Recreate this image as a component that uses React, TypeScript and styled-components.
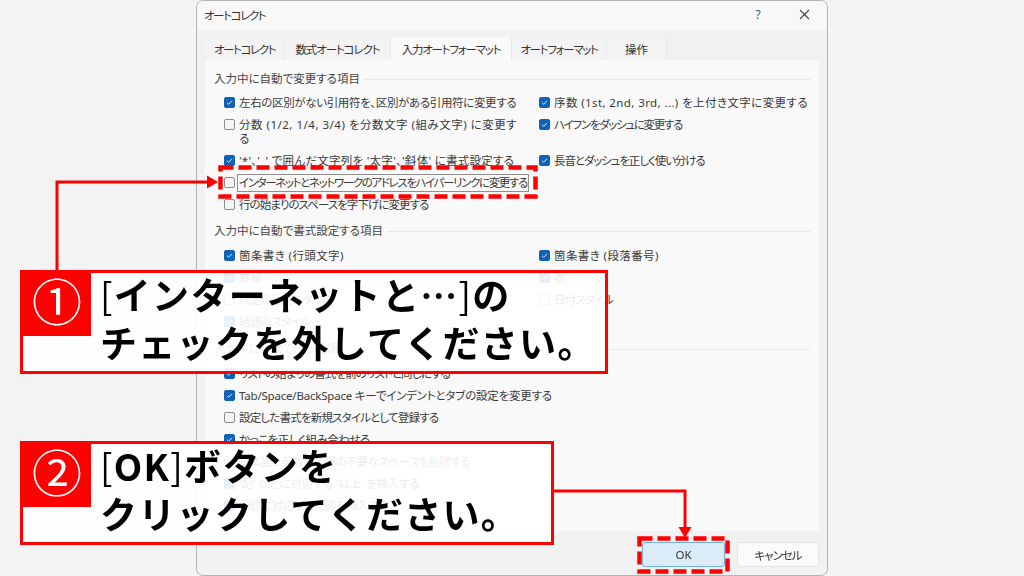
import styled, { createGlobalStyle } from "styled-components";

const GlobalStyle = createGlobalStyle`
  html, body {
    margin: 0;
    padding: 0;
    background: #f3f3f3;
  }
  body {
    font-family: "Noto Sans", "Noto Sans CJK JP", sans-serif;
  }
`;

type RowData = { label: React.ReactNode; checked?: boolean; track?: number };

const section1: RowData[] = [
  { label: "左右の区別がない引用符を、区別がある引用符に変更する", checked: true, track: -0.35 },
  { label: "序数 (1st, 2nd, 3rd, ...) を上付き文字に変更する", checked: true, track: 0.4 },
  { label: <>分数 (1/2, 1/4, 3/4) を分数文字 (組み文字) に変更す<br />る</>, track: 0.5 },
  { label: "ハイフンをダッシュに変更する", checked: true, track: -1.3 },
  { label: "'*'、'_' で囲んだ文字列を '太字'、'斜体' に書式設定する", checked: true, track: 0.27 },
  { label: "長音とダッシュを正しく使い分ける", checked: true, track: -1.1 },
];

const section2: RowData[] = [
  { label: "箇条書き (行頭文字)", checked: true, track: 0.4 },
  { label: "箇条書き (段落番号)", checked: true, track: 0.4 },
  { label: "罫線", checked: true },
  { label: "表", checked: true },
  { label: "既定の段落スタイル", track: -0.6 },
  { label: "日付スタイル", track: -0.9 },
  { label: "結語のスタイル", checked: true, track: -0.6 },
];

const section3: RowData[] = [
  { label: "リストの始まりの書式を前のリストと同じにする", checked: true, track: -0.9 },
  { label: "Tab/Space/BackSpace キーでインデントとタブの設定を変更する", checked: true, track: -0.2 },
  { label: "設定した書式を新規スタイルとして登録する", track: -0.8 },
  { label: "かっこを正しく組み合わせる", checked: true, track: -0.5 },
  { label: "日本語と英数字の間の不要なスペースを削除する", track: -0.6 },
  { label: "'記' などに対応する '以上' を挿入する", checked: true, track: -0.2 },
  { label: "頭語に対応する結語を挿入する", checked: true, track: -0.4 },
];

const tabs = [
  { label: "オートコレクト", width: 80, track: -1.4 },
  { label: "数式オートコレクト", width: 106, track: -1.1 },
  { label: "入力オートフォーマット", width: 121, track: -1.2, active: true },
  { label: "オートフォーマット", width: 95, track: -1.3 },
  { label: "操作", width: 60, track: 0 },
];

const Option = ({ label, checked, track, focused }: RowData & { focused?: boolean }) => (
  <Row>
    <Check $checked={checked}>
      {checked && (
        <svg width="9" height="9" viewBox="0 0 9 9" fill="none">
          <path d="M2 4.7 3.7 6.3 7 2.8" stroke="#dfeaf6" strokeWidth="1" />
        </svg>
      )}
    </Check>
    <Label $focused={focused} $track={track ?? 0}>{label}</Label>
  </Row>
);

const App = () => (
  <>
    <GlobalStyle />
    <Page>
      <Dialog>
        <TitleBar>
          <Title>オートコレクト</Title>
          <Help>?</Help>
          <CloseBtn>
            <svg width="11" height="11" viewBox="0 0 11 11" fill="none">
              <path d="M1 1 10 10M10 1 1 10" stroke="#444" strokeWidth="1.1" />
            </svg>
          </CloseBtn>
        </TitleBar>

        <Tabs>
          {tabs.map((t) => (
            <Tab key={t.label} $width={t.width} $active={t.active} $track={t.track}>
              {t.label}
            </Tab>
          ))}
        </Tabs>

        <Pane>
          <Section $top={11}>
            <Legend>入力中に自動で変更する項目</Legend>
            <OptionGrid $gap={5}>
              {section1.map((r, i) => <Option key={i} {...r} />)}
              <Option label="インターネットとネットワークのアドレスをハイパーリンクに変更する" track={-1.35} focused />
              <span />
              <Option label="行の始まりのスペースを字下げに変更する" track={-0.95} />
            </OptionGrid>
          </Section>

          <Section $top={7}>
            <Legend>入力中に自動で書式設定する項目</Legend>
            <OptionGrid $gap={6}>
              {section2.map((r, i) => <Option key={i} {...r} />)}
            </OptionGrid>
          </Section>

          <Section $top={8}>
            <Legend>入力中に自動で行う処理</Legend>
            <OptionGrid $gap={6} $single>
              {section3.map((r, i) => <Option key={i} {...r} />)}
            </OptionGrid>
          </Section>
        </Pane>

        <Footer>
          <OkBtn>OK</OkBtn>
          <CancelBtn>キャンセル</CancelBtn>
        </Footer>
      </Dialog>

      <Annotations viewBox="0 0 1024 576" width="1024" height="576" fill="none">
        <path d="M57 272V182H210" stroke="#f00" strokeWidth="3" />
        <path d="M207 175.5 218 182 207 188.5Z" fill="#f00" />
        <path d="M552 491H685V530" stroke="#f00" strokeWidth="3" />
        <path d="M678.5 527 685 538 691.5 527Z" fill="#f00" />
        <rect x="220.5" y="167.5" width="315" height="29" stroke="#f00" strokeWidth="4.5" strokeDasharray="13 5" />
        <rect x="639.5" y="538.5" width="88" height="33" stroke="#f00" strokeWidth="4.5" strokeDasharray="13 5" />
      </Annotations>

      <Callout $top={270} $width={588}>
        <Badge>①</Badge>
        <CalloutText>
          <Bracket>[</Bracket>インターネットと…<Bracket>]</Bracket>の
          <br />
          チェックを外してください。
        </CalloutText>
      </Callout>

      <Callout $top={441} $width={534}>
        <Badge>②</Badge>
        <CalloutText>
          <Bracket>[</Bracket>OK<Bracket>]</Bracket>ボタンを
          <br />
          クリックしてください。
        </CalloutText>
      </Callout>
    </Page>
  </>
);

const Page = styled.div`
  position: relative;
  width: 1024px;
  height: 576px;
  overflow: hidden;
  padding-left: 196px;
  box-sizing: border-box;
  background: #f3f3f3;
`;

const Dialog = styled.div`
  width: 632px;
  height: 576px;
  box-sizing: border-box;
  display: flex;
  flex-direction: column;
  background: #f1f1f1;
  border: 1px solid #b4b4b4;
  border-radius: 7px;
  color: #333;
  font-size: 11.5px;
  font-feature-settings: "palt";
  filter: blur(0.25px);
`;

const TitleBar = styled.div`
  height: 29px;
  flex-shrink: 0;
  display: flex;
  align-items: center;
  padding: 0 0 2px 7px;
  box-sizing: border-box;
  background: #f8f8f8;
  border-radius: 7px 7px 0 0;
`;

const Title = styled.div`
  flex: 1;
  font-size: 11.5px;
  letter-spacing: -1.4px;
`;

const Help = styled.div`
  width: 46px;
  text-align: center;
  font-size: 12px;
  color: #555;
`;

const CloseBtn = styled.div`
  width: 46px;
  display: flex;
  justify-content: center;
`;

const Tabs = styled.div`
  display: flex;
  height: 23px;
  margin: 7px 0 0 8px;
  flex-shrink: 0;
`;

const Tab = styled.div<{ $width: number; $active?: boolean; $track: number }>`
  width: ${({ $width }) => $width}px;
  display: flex;
  align-items: center;
  justify-content: center;
  font-size: 11.5px;
  letter-spacing: ${({ $track }) => $track}px;
  background: ${({ $active }) => ($active ? "#f9f9f9" : "#f3f3f3")};
  border-right: 1px solid #e9e9e9;
  box-sizing: border-box;
`;

const Pane = styled.div`
  height: 471px;
  margin: 0 8px;
  flex-shrink: 0;
  padding: 0 8px 0 9px;
  background: #f9f9f9;
`;

const Section = styled.div<{ $top: number }>`
  padding-top: ${({ $top }) => $top}px;
`;

const Legend = styled.div`
  display: flex;
  align-items: center;
  gap: 4px;
  height: 16px;
  line-height: 16px;
  color: #444;

  &::after {
    content: "";
    flex: 1;
    height: 1px;
    background: #e8e8e8;
  }
`;

const OptionGrid = styled.div<{ $single?: boolean; $gap: number }>`
  display: grid;
  grid-template-columns: ${({ $single }) => ($single ? "1fr" : "315px 1fr")};
  padding: ${({ $gap }) => $gap}px 0 0 10px;
`;

const Row = styled.div`
  display: flex;
  align-items: flex-start;
  gap: 4px;
  padding: 4px 0;
  white-space: nowrap;
`;

const Check = styled.span<{ $checked?: boolean }>`
  width: 11px;
  height: 11px;
  margin-top: 1px;
  box-sizing: border-box;
  flex-shrink: 0;
  display: flex;
  align-items: center;
  justify-content: center;
  border-radius: 2px;
  background: ${({ $checked }) => ($checked ? "#0f62b5" : "#f5f5f5")};
  border: 1px solid ${({ $checked }) => ($checked ? "#0f62b5" : "#8c8c8c")};
`;

const Label = styled.span<{ $focused?: boolean; $track: number }>`
  line-height: 14px;
  color: #3a3a3a;
  letter-spacing: ${({ $track }) => $track}px;
  outline: ${({ $focused }) => ($focused ? "1px solid #8f8f8f" : "none")};
  outline-offset: 1px;
`;

const Footer = styled.div`
  flex: 1;
  display: flex;
  justify-content: flex-end;
  align-items: flex-start;
  gap: 12px;
  padding: 11px 8px 0 0;
`;

const OkBtn = styled.div`
  width: 83px;
  height: 25px;
  box-sizing: border-box;
  display: flex;
  align-items: center;
  justify-content: center;
  background: #dcebf8;
  border: 1px solid #6fb0e6;
  border-radius: 3px;
  font-size: 11.5px;
`;

const CancelBtn = styled(OkBtn)`
  width: 82px;
  background: #fbfbfb;
  border-color: #e4e4e4;
  letter-spacing: -1px;
`;

const Annotations = styled.svg`
  position: absolute;
  left: 0;
  top: 0;
  pointer-events: none;
`;

const Callout = styled.div<{ $top: number; $width: number }>`
  position: absolute;
  left: 20px;
  top: ${({ $top }) => $top}px;
  width: ${({ $width }) => $width}px;
  height: 104px;
  box-sizing: border-box;
  display: flex;
  align-items: flex-start;
  background: rgba(255, 255, 255, 0.9);
  border: 3px solid #f00;
`;

const Badge = styled.div`
  width: 68px;
  height: 63px;
  padding-bottom: 12px;
  box-sizing: border-box;
  flex-shrink: 0;
  display: flex;
  align-items: center;
  justify-content: center;
  background: #f00;
  color: #fff;
  font-family: "Noto Sans CJK JP", sans-serif;
  font-size: 50px;
  line-height: 1;
`;

const CalloutText = styled.div`
  margin-top: -3px;
  padding-left: 9px;
  font-family: "Noto Sans CJK JP", sans-serif;
  font-size: 37px;
  font-weight: 700;
  line-height: 48px;
  letter-spacing: 1.3px;
  color: #000;
  white-space: nowrap;
`;

const Bracket = styled.span`
  font-weight: 400;
`;

export default App;
